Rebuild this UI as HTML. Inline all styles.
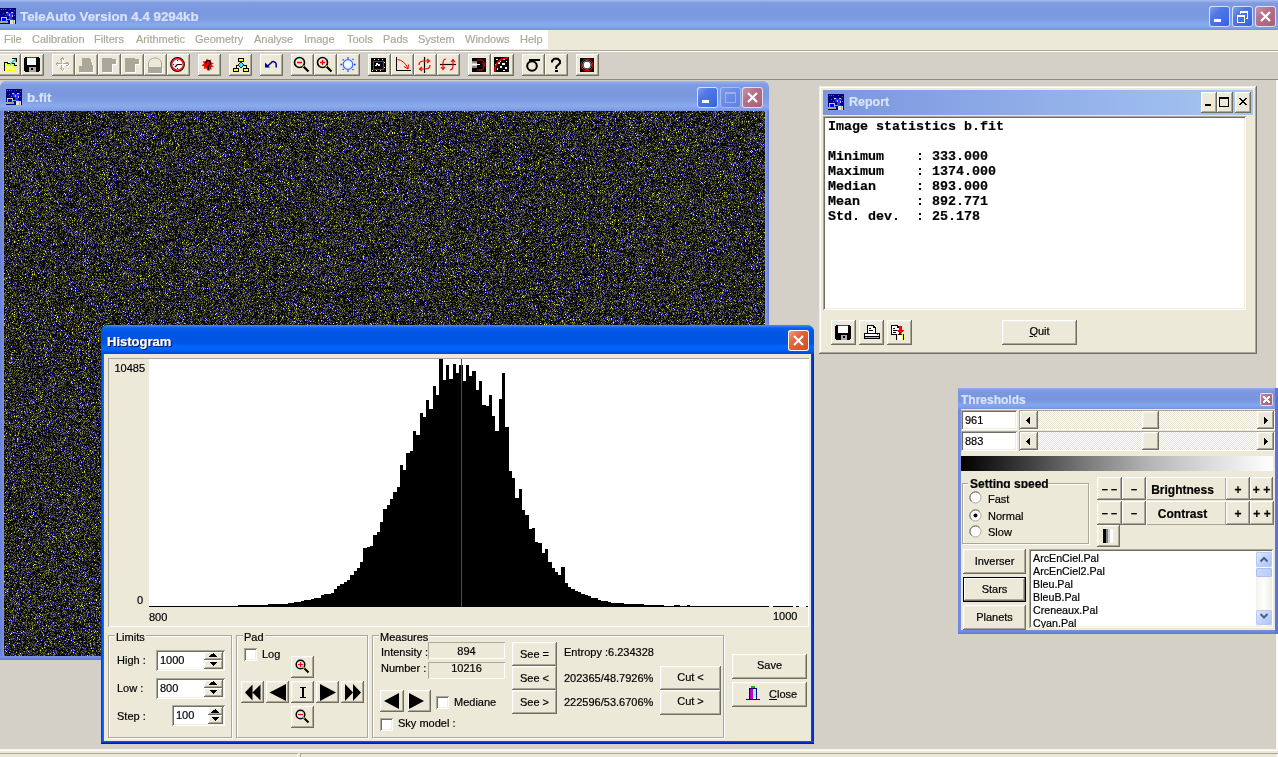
<!DOCTYPE html>
<html><head><meta charset="utf-8">
<style>
*{box-sizing:border-box}
html,body{margin:0;padding:0}
body{width:1278px;height:757px;overflow:hidden;position:relative;background:#D4D0C8;font-family:"Liberation Sans",sans-serif;font-size:11px;color:#000;-webkit-text-stroke:0.2px currentColor}
.a{position:absolute}
.t{position:absolute;white-space:nowrap;line-height:1;will-change:transform}
.face{background:#ECE9D8}
.btn{position:absolute;background:#ECE9D8;box-shadow:inset -1px -1px #716F64,inset 1px 1px #fff,inset -2px -2px #ACA899,inset 2px 2px #F1EFE2}
.tbtn{position:absolute;background:#ECE9D8;box-shadow:inset -1px -1px #716F64,inset 1px 1px #fff,inset -2px -2px #ACA899;width:23px;height:22px;top:54px}
.sunk{position:absolute;box-shadow:inset 1px 1px #ACA899,inset -1px -1px #fff,inset 2px 2px #716F64,inset -2px -2px #F1EFE2}
.sunk1{position:absolute;box-shadow:inset 1px 1px #ACA899,inset -1px -1px #fff}
.grp{position:absolute;border:1px solid #ACA899;box-shadow:inset 1px 1px #fff,1px 1px #fff}
.gl{position:absolute;background:#ECE9D8;padding:0 1px;line-height:1;top:-5px;white-space:nowrap;will-change:transform}
.ctr{display:flex;align-items:center;justify-content:center}
.xpt{position:absolute;border-radius:8px 8px 0 0}
.xb{position:absolute;width:21px;height:21px;border-radius:3px;box-shadow:inset 0 0 0 1px rgba(235,240,255,.85);background:linear-gradient(135deg,#88A4EE 0,#5078E6 35%,#3E6AE6 75%,#2D5ADC 100%)}
.xb svg{position:absolute;left:0;top:0}
.xc{background:linear-gradient(135deg,#C597B0 0,#B3728A 40%,#A85E74 100%)}
.xd{background:linear-gradient(135deg,#7E9BE8 0,#6A8BE4 50%,#5D80E0 100%);box-shadow:inset 0 0 0 1px rgba(200,215,250,.6)}
.xa{background:linear-gradient(135deg,#F2A68A 0,#E0653D 40%,#D24A1C 100%);box-shadow:inset 0 0 0 1px #fff}
.cb{position:absolute;width:16px;height:21px;background:#ECE9D8;box-shadow:inset -1px -1px #716F64,inset 1px 1px #fff,inset -2px -2px #ACA899,inset 2px 2px #F1EFE2}
.cb svg{position:absolute;left:0;top:0}
.chk{position:absolute;width:13px;height:13px;background:#fff;box-shadow:inset 1px 1px #ACA899,inset -1px -1px #fff,inset 2px 2px #716F64,inset -2px -2px #F1EFE2}
.fld{position:absolute;box-shadow:inset 1px 1px #ACA899,inset -1px -1px #fff}
.c{position:absolute;white-space:nowrap;line-height:1;text-align:center;will-change:transform}
</style></head><body>
<svg width="0" height="0" style="position:absolute"><defs>
<symbol id="ico" viewBox="0 0 16 16" shape-rendering="crispEdges">
<rect width="16" height="16" fill="#000080"/>
<path d="M1 1h1v1H1zM3 1h1v1H3zM5 1h1v1H5zM10 1h1v1h-1zM14 2h1v1h-1zM3 5h1v1H3zM5 7h1v1H5zM14 7h1v1h-1z" fill="#6060A0"/>
<path d="M6 4h3v1h2V4h3v2h-1v3h-1v2h1v2h-3v-2h-1V9H9V8H7V6H6z" fill="#3030FF"/>
<path d="M6 4h2v1H6zM11 4h2v1h-2zM9 6h1v2H9zM12 7h1v2h-1z" fill="#C8C8FF"/>
<path d="M1 9h6v5H1z" fill="#D0C8B0"/><path d="M2 10h4v3H2z" fill="#0000FF"/>
<path d="M0 13h8v2H0z" fill="#A8A090"/><path d="M1 13h3v1H1z" fill="#60E060"/>
<path d="M6 12h1v1H6zM7 11h3v1H7z" fill="#00D0E0"/>
<path d="M10 12h5v4h-5z" fill="#E8E0C8"/><path d="M13 12h1v4h-1z" fill="#B0A890"/>
</symbol>
</defs></svg>

<!-- ============ MAIN TITLE BAR ============ -->
<div class="a" style="left:0;top:0;width:1278px;height:30px;background:linear-gradient(#A8BCEC 0,#9AB0E8 1px,#7F9BE0 3px,#7A97DF 12px,#7C9ADF 18px,#87AAEF 25px,#7E9FE6 28px,#7192DB 30px)"></div>
<svg class="a" style="left:0;top:8px" width="16" height="16"><use href="#ico"/></svg>
<div class="t" style="left:20px;top:10px;font-size:13.3px;font-weight:bold;color:#D8E2F8">TeleAuto Version 4.4 9294kb</div>

<div class="xb" style="left:1209px;top:6px"><svg width="21" height="21"><path d="M5 13h7v3H5z" fill="#fff"/></svg></div>
<div class="xb" style="left:1232px;top:6px"><svg width="21" height="21" shape-rendering="crispEdges"><path d="M8 5h8v8h-2v-1h1V7H9v1H8z" fill="#fff"/><path d="M5 9h8v8H5zM6 11v5h6v-5z" fill="#fff" fill-rule="evenodd"/></svg></div>
<div class="xb xc" style="left:1255px;top:6px"><svg width="21" height="21"><path d="M6 6l9 9M15 6l-9 9" stroke="#fff" stroke-width="2.2"/></svg></div>
<!-- ============ MENU BAR ============ -->
<div class="a" style="left:0;top:30px;width:1278px;height:20px;background:#ECE9D8"></div>
<div class="a" style="left:0;top:30px;width:548px;height:19px;background:#fff"></div>
<div class="t" style="left:4px;top:34px;color:#ACA899">File</div><div class="t" style="left:32px;top:34px;color:#ACA899">Calibration</div><div class="t" style="left:94px;top:34px;color:#ACA899">Filters</div><div class="t" style="left:136px;top:34px;color:#ACA899">Arithmetic</div><div class="t" style="left:195px;top:34px;color:#ACA899">Geometry</div><div class="t" style="left:254px;top:34px;color:#ACA899">Analyse</div><div class="t" style="left:304px;top:34px;color:#ACA899">Image</div><div class="t" style="left:347px;top:34px;color:#ACA899">Tools</div><div class="t" style="left:383px;top:34px;color:#ACA899">Pads</div><div class="t" style="left:418px;top:34px;color:#ACA899">System</div><div class="t" style="left:465px;top:34px;color:#ACA899">Windows</div><div class="t" style="left:520px;top:34px;color:#ACA899">Help</div>
<div class="a" style="left:0;top:50px;width:1278px;height:1px;background:#ACA899"></div>
<div class="a" style="left:0;top:51px;width:1278px;height:1px;background:#fff"></div>

<!-- ============ TOOLBAR ============ -->
<div class="a" style="left:0;top:79px;width:1278px;height:1px;background:#8E8B7D"></div>
<div class="tbtn" style="left:-2px"></div><div class="tbtn" style="left:21px"></div><div class="tbtn" style="left:52px"></div><div class="tbtn" style="left:75px"></div><div class="tbtn" style="left:98px"></div><div class="tbtn" style="left:121px"></div><div class="tbtn" style="left:144px"></div><div class="tbtn" style="left:167px"></div><div class="tbtn" style="left:198px"></div><div class="tbtn" style="left:229px"></div><div class="tbtn" style="left:260px"></div><div class="tbtn" style="left:291px"></div><div class="tbtn" style="left:314px"></div><div class="tbtn" style="left:337px"></div><div class="tbtn" style="left:368px"></div><div class="tbtn" style="left:391px"></div><div class="tbtn" style="left:414px"></div><div class="tbtn" style="left:437px"></div><div class="tbtn" style="left:468px"></div><div class="tbtn" style="left:491px"></div><div class="tbtn" style="left:522px"></div><div class="tbtn" style="left:545px"></div><div class="tbtn" style="left:576px"></div>
<svg class="a" style="left:0;top:0" width="620" height="80" viewBox="0 0 620 80">
<g shape-rendering="crispEdges">
<!-- open folder -->
<path d="M4 62h4v1h7v2h2v1h-1v5H4z" fill="#000"/>
<path d="M5 63h2v1h7v2h2v5H5z" fill="#FFFF00"/>
<path d="M6 66h9v4H6z" fill="#FFF" opacity=".5"/>
<path d="M9 64l5-5h-2v-1h4v4h-1v-2l-5 5z" fill="#00E0C0"/>
<path d="M12 58h5v1h-5zM16 58h1v4h-1z" fill="#000"/>
<!-- floppy -->
<path d="M25 57h14v1h1v13h-1v1H25v-1h-1V58h1z" fill="#000"/>
<path d="M27 57h9v1h-9z" fill="#F00"/>
<path d="M27 58h9v7h-9z" fill="#FFF"/>
<path d="M29 67h7v5h-7z" fill="#A8A8A8"/>
<path d="M31 68h2v2h-2z" fill="#000"/>
<!-- disabled move -->
<g fill="#fff" transform="translate(1,1)">
<path d="M62 57l-2 2v1h1v3h-3v-1h-1l-2 2 2 2h1v-1h3v3h-1v1l2 2 2-2v-1h-1v-3h3v1h1l2-2-2-2h-1v1h-3v-3h1v-1z"/>
<path d="M82 58h8l3 8v6H79v-6h3zM102 58h10v1h4v5h-4v8h-10zM125 58h10v1h4v5h-4v8h-10zM148 67h14v6h-14z"/>
</g>
<g fill="#ACA899">
<path d="M62 57l-2 2v1h1v3h-3v-1h-1l-2 2 2 2h1v-1h3v3h-1v1l2 2 2-2v-1h-1v-3h3v1h1l2-2-2-2h-1v1h-3v-3h1v-1z"/>
<path d="M82 58h8l3 8v6H79v-6h3zM102 58h10v1h4v5h-4v8h-10zM125 58h10v1h4v5h-4v8h-10zM148 67h14v6h-14z"/>
</g>
<path d="M62 59v11M57 64h11" stroke="#fff" stroke-width="1"/>
</g>
<path d="M148.5 67V63a6.5 5 0 0 1 13 0V67" fill="none" stroke="#ACA899" stroke-width="1"/>
<!-- clock -->
<circle cx="177.5" cy="64.5" r="6.8" fill="#fff" stroke="#000" stroke-width="1.2"/>
<circle cx="177.5" cy="64.5" r="5.8" fill="none" stroke="#F00" stroke-width="1.4"/>
<g fill="#0000FF" shape-rendering="crispEdges"><rect x="177" y="60" width="1" height="1"/><rect x="177" y="68" width="1" height="1"/><rect x="173" y="64" width="1" height="1"/><rect x="181" y="64" width="1" height="1"/></g>
<path d="M177.5 64.5h3.5M177.5 64.5l-2.5 2.5" stroke="#000" stroke-width="1.1"/>
<!-- star ? -->
<path d="M207 58.5l1.5 2.5 2.5-1.5-.3 3 3 .5-2.2 2 2.5 1.5-3 .8.5 2.7-2.7-1.2-1.5 2-1-2.5-2.7.8.8-2.7-2.8-1 2.4-1.8-1.5-2.4 3 .3z" fill="#F00"/>
<path d="M206 63.5a2.3 2.3 0 1 1 3.5 1.3l-1.2 1v2.5l.9 2.3" fill="none" stroke="#000" stroke-width="1.3"/>
<!-- org chart -->
<g shape-rendering="crispEdges">
<path d="M238 58h6v4h-6zM233 68h6v4h-6zM243 68h6v4h-6z" fill="#000"/>
<path d="M239 59h4v2h-4zM234 69h4v2h-4zM244 69h4v2h-4z" fill="#FFFF00"/>
<path d="M236 68v-3h2M246 68v-3h-2" stroke="#000" fill="none"/>
</g>
<path d="M241 62l3 3-3 3-3-3z" fill="#40E0FF" stroke="#000" stroke-width=".8"/>
<!-- undo -->
<path d="M267.5 66l3.5-3a2.8 2.8 0 0 1 5.2 1.3v3.2" fill="none" stroke="#000080" stroke-width="1.5"/>
<path d="M265 62.5v5h5z" fill="#000080"/>
<!-- magnifiers -->
<g fill="none" stroke="#000" stroke-width="1.6"><circle cx="299.5" cy="62.5" r="5"/><circle cx="322.5" cy="62.5" r="5"/></g>
<path d="M303 66l5.5 5.5M326 66l5.5 5.5" stroke="#000" stroke-width="2.2"/>
<path d="M302.8 65.8l1 1M325.8 65.8l1 1" stroke="#E0E000" stroke-width="1.5"/>
<path d="M297 62.5h5M320 62.5h5M322.5 60v5" stroke="#F00" stroke-width="1.3"/>
<!-- sun -->
<circle cx="348" cy="64.5" r="4.8" fill="#E8F4FF" stroke="#3A6AFF" stroke-width="1.2"/>
<circle cx="347.5" cy="64" r="2.5" fill="#fff"/>
<g stroke="#1030FF" stroke-width="1.3"><path d="M348 57.2v1.6M348 70.2v1.6M340.5 64.5h1.6M354 64.5h1.6M342.8 59.5l.8.8M352.6 69.2l.8.8M352.6 59.8l.8-.8M342.8 69.8l.8-.8"/></g>
<!-- image icon -->
<g shape-rendering="crispEdges">
<path d="M371 58h15v14h-15z" fill="#000"/>
<path d="M373 61h10v8h-10z" fill="none" stroke="#F00" stroke-width="1"/>
<path d="M376 63h2v2h-2zM378 64h2v2h-2zM375 65h2v1h-2zM374 59h1v1h-1zM378 59h1v1h-1zM382 59h1v1h-1zM384 62h1v1h-1zM372 70h1v1h-1zM376 70h1v1h-1zM380 70h1v1h-1zM384 67h1v1h-1z" fill="#fff"/>
<!-- axes -->
<path d="M396 57h1v13h14v1h-15z" fill="#000"/>
</g>
<path d="M397.5 59.5q7 1 10.5 9" fill="none" stroke="#F00" stroke-width="1"/>
<path d="M404 66.5l4 2.5.5-4.5" fill="none" stroke="#F00" stroke-width="1"/>
<!-- vertical flip -->
<path d="M424.5 57v16" stroke="#000" stroke-width="1.2"/>
<path d="M419 65q0-4 5-4h5M427 59l2.5 2-2.5 2M430 65q0 4-5 4h-5M422 67l-2.5 2 2.5 2" fill="none" stroke="#F00" stroke-width="1.2"/>
<!-- horizontal flip -->
<path d="M440 64.5h16" stroke="#000" stroke-width="1.2"/>
<path d="M446 59q-3 0-3 5v5M441 67l2 2.5 2-2.5M450 70q3 0 3-5v-5M451 62l2-2.5 2 2.5" fill="none" stroke="#F00" stroke-width="1.2"/>
<!-- btn19 -->
<g shape-rendering="crispEdges">
<path d="M472 58h14v14h-14z" fill="#000"/>
<path d="M472 61h5v2h-5z" fill="#888"/><path d="M472 63h5v1h-5z" fill="#ccc"/><path d="M472 64h8v1h-8z" fill="#fff"/><path d="M472 65h5v1h-5z" fill="#ccc"/><path d="M472 66h5v2h-5z" fill="#888"/>
</g>
<path d="M477 60h4q3 0 3 4.5M477 70h4q3 0 3-4.5M482 62.5l2 2 2-2M482 66.5l2-2 2 2" fill="none" stroke="#F00" stroke-width="1"/>
<!-- btn20 -->
<g shape-rendering="crispEdges"><path d="M494 57h15v15h-15z" fill="#000"/>
<path d="M496 59h2v1h-2zM500 60h1v2h-1zM503 59h2v1h-2zM498 62h2v2h-2zM502 63h3v2h-3zM500 66h2v2h-2zM505 67h2v2h-2zM497 68h1v2h-1zM503 70h2v1h-2zM506 61h1v1h-1zM495 64h1v1h-1z" fill="#fff"/></g>
<path d="M494.8 72q0-13.5 13.5-14" fill="none" stroke="#F00" stroke-width="1.5"/>
<!-- sigma -->
<circle cx="532" cy="66" r="4.8" fill="none" stroke="#000" stroke-width="2"/>
<path d="M529 59h11v2h-11z" fill="#000" shape-rendering="crispEdges"/>
<path d="M552 62.5v-1.5l2.2-2.2h3.6l2.2 2.2v2l-3.8 3.8v2.2" fill="none" stroke="#000" stroke-width="2"/>
<path d="M555 69.5h3v2.5h-3z" fill="#000" shape-rendering="crispEdges"/>
<!-- btn23 -->
<path d="M580 58h14v14h-14z" fill="#000" shape-rendering="crispEdges"/>
<circle cx="587" cy="65" r="6" fill="none" stroke="#F00" stroke-width="1"/>
<circle cx="587" cy="65" r="3.3" fill="#fff"/>
<circle cx="587" cy="65" r="4.2" fill="none" stroke="#999" stroke-width="1"/>
</svg>

<div class="a" style="left:1276px;top:80px;width:2px;height:670px;background:linear-gradient(90deg,#F4F3EA,#fff)"></div>
<!-- ============ B.FIT WINDOW ============ -->
<div id="bfit" class="a" style="left:0;top:81px;width:769px;height:579px;background:#7E9BE3;border-radius:7px 7px 0 0"></div>
<div class="a" style="left:0;top:111px;width:4px;height:549px;background:linear-gradient(90deg,#6A80D6,#7088DA 50%,#7E96E0)"></div>
<div class="a" style="left:765px;top:111px;width:4px;height:549px;background:linear-gradient(90deg,#8AA6EA,#7790DE 50%,#6078D2)"></div>
<div class="a" style="left:0;top:656px;width:769px;height:4px;background:linear-gradient(#7C94E0,#7088DA 50%,#6078D0)"></div>
<div class="a" style="left:0;top:81px;width:769px;height:30px;border-radius:7px 7px 0 0;background:linear-gradient(#A6BBEE 0,#93ACEA 1px,#7F9BE2 4px,#7A97DF 14px,#7F9EE3 20px,#88AAEE 25px,#7C9BE4 29px,#7190DD 30px)"></div>
<svg class="a" style="left:6px;top:89px" width="16" height="16"><use href="#ico"/></svg>
<div class="t" style="left:27px;top:91px;font-size:13.3px;font-weight:bold;color:#D8E2F8">b.fit</div>
<div class="xb" style="left:697px;top:87px"><svg width="21" height="21"><path d="M5 13h7v3H5z" fill="#fff"/></svg></div>
<div class="xb xd" style="left:720px;top:87px"><svg width="21" height="21" shape-rendering="crispEdges"><path d="M5 5h11v11H5zM6 7v8h9V7z" fill="rgba(190,205,245,.55)" fill-rule="evenodd"/></svg></div>
<div class="xb xc" style="left:742px;top:87px"><svg width="21" height="21"><path d="M6 6l9 9M15 6l-9 9" stroke="#fff" stroke-width="2.2"/></svg></div>
<canvas id="noise" class="a" width="761" height="545" style="left:4px;top:111px;width:761px;height:545px;background:#222"></canvas>

<!-- ============ REPORT WINDOW ============ -->
<div class="a face" style="left:819px;top:86px;width:438px;height:268px;box-shadow:inset -1px -1px #716F64,inset 1px 1px #F1EFE2,inset -2px -2px #ACA899,inset 2px 2px #fff"></div>
<div class="a" style="left:823px;top:90px;width:430px;height:25px;background:linear-gradient(90deg,#7B96DF,#A6C6F2)"></div>
<svg class="a" style="left:828px;top:94px" width="16" height="16"><use href="#ico"/></svg>
<div class="t" style="left:849px;top:96px;font-size:12.5px;font-weight:bold;color:#D8E4F8">Report</div>
<div class="cb" style="left:1201px;top:92px"><svg width="16" height="21" shape-rendering="crispEdges"><path d="M4 12h6v2H4z" fill="#000"/></svg></div>
<div class="cb" style="left:1217px;top:92px"><svg width="16" height="21" shape-rendering="crispEdges"><path d="M2 5h10v10H2zM3 7v7h8V7z" fill="#000" fill-rule="evenodd"/></svg></div>
<div class="cb" style="left:1235px;top:92px"><svg width="16" height="21" shape-rendering="crispEdges"><path d="M4 6h2v1h1v1h2V7h1V6h2v1h-1v1h-1v1h-1v1h1v1h1v1h1v1h-2v-1H9v-1H7v1H6v1H4v-1h1v-1h1v-1h1V9H6V8H5V7H4z" fill="#000"/></svg></div>
<div class="sunk" style="left:823px;top:116px;width:423px;height:194px;background:#fff"></div>

<div class="a" style="will-change:transform;left:828px;top:119px;font-family:'Liberation Mono',monospace;font-weight:bold;font-size:13.33px;line-height:15px;white-space:pre">Image statistics b.fit

Minimum    : 333.000
Maximum    : 1374.000
Median     : 893.000
Mean       : 892.771
Std. dev.  : 25.178</div>
<div class="btn" style="left:831px;top:320px;width:25px;height:25px"></div>
<div class="btn" style="left:859px;top:320px;width:25px;height:25px"></div>
<div class="btn" style="left:887px;top:320px;width:25px;height:25px"></div>
<svg class="a" style="left:831px;top:320px" width="82" height="25" shape-rendering="crispEdges">
<path d="M5 5h14v1h1v13h-1v1H5v-1H4V6h1z" fill="#000"/><path d="M7 5h10v1H7z" fill="#F00"/><path d="M7 6h10v7H7z" fill="#fff"/><path d="M10 15h6v5h-6z" fill="#A8A8A8"/><path d="M12 16h2v2h-2z" fill="#000"/>
<path d="M36 5h6l3 3v6h-9z" fill="#000"/><path d="M37 6h5v2h2v6h-7z" fill="#fff"/><path d="M38 8h2v1h-2zM38 10h4v1h-4z" fill="#000"/>
<path d="M33 13h16v6h-16z" fill="#000"/><path d="M34 14h14v2H34z" fill="#fff"/><path d="M34 17h14v1H34z" fill="#A8A8A8"/><path d="M46 14h1v1h-1z" fill="#F00"/>
<path d="M60 5h6l3 3v7h-9z" fill="#000"/><path d="M61 6h5v2h2v6h-7z" fill="#fff"/><path d="M62 8h2v1h-2zM62 10h4v1h-4zM62 12h3v1h-3z" fill="#000"/>
<path d="M65 14h8v6h-8z" fill="#000"/><path d="M66 14h1v6h-1zM71 14h1v6h-1z" fill="#FFFF00"/><path d="M67 15h4v5h-4z" fill="#fff"/>
<path d="M68 6h3v4h2l-3.5 4-3.5-4h2z" fill="#F00"/>
</svg>
<div class="btn" style="left:1002px;top:320px;width:75px;height:25px"></div>
<div class="c" style="left:1002px;top:326px;width:75px"><u>Q</u>uit</div>
<!-- ============ THRESHOLDS WINDOW ============ -->
<div class="a" style="left:958px;top:388px;width:320px;height:246px;background:linear-gradient(90deg,#6F86DA,#7E96E2 1.5%,#7E96E2 98%,#5C74D4)"></div>
<div class="a face" style="left:961px;top:409px;width:314px;height:221px"></div>
<div class="a" style="left:958px;top:630px;width:320px;height:4px;background:linear-gradient(#7A92E0,#6C84D8 60%,#5E76D0)"></div>
<div class="a" style="left:958px;top:388px;width:320px;height:21px;background:linear-gradient(#9CB4EC 0,#86A2E6 1px,#7A97DF 4px,#7895DF 12px,#84A6EC 17px,#7F9FE8 19px,#7393DE 21px)"></div>
<div class="a" style="left:1275px;top:388px;width:3px;height:246px;background:#5C74D4"></div>
<div class="t" style="left:961px;top:394px;font-size:12px;font-weight:bold;color:#D8E4F8">Thresholds</div>
<div class="xb xc" style="left:1260px;top:393px;width:13px;height:13px;border-radius:2px"><svg width="13" height="13" shape-rendering="crispEdges"><path d="M3 3h2v1h1v1h1V4h1V3h2v2H9v1H8v1h1v1h1v2H8V9H7V8H6v1H5v1H3V8h1V7h1V6H4V5H3z" fill="#fff"/></svg></div>
<!-- edits -->
<div class="sunk" style="left:961px;top:410px;width:56px;height:20px;background:#fff"></div>
<div class="sunk" style="left:961px;top:431px;width:56px;height:20px;background:#fff"></div>
<div class="t" style="left:965px;top:415px">961</div>
<div class="t" style="left:965px;top:436px">883</div>
<!-- scrollbars -->
<div class="sunk1" style="left:1019px;top:410px;width:256px;height:20px;background:repeating-conic-gradient(#E6E3D4 0 25%,#fff 0 50%) 0 0/2px 2px"></div>
<div class="sunk1" style="left:1019px;top:431px;width:256px;height:20px;background:repeating-conic-gradient(#E6E3D4 0 25%,#fff 0 50%) 0 0/2px 2px"></div>
<div class="btn" style="left:1020px;top:411px;width:18px;height:18px"></div>
<div class="btn" style="left:1142px;top:411px;width:17px;height:18px"></div>
<div class="btn" style="left:1257px;top:411px;width:17px;height:18px"></div>
<div class="btn" style="left:1020px;top:432px;width:18px;height:18px"></div>
<div class="btn" style="left:1142px;top:432px;width:17px;height:18px"></div>
<div class="btn" style="left:1257px;top:432px;width:17px;height:18px"></div>
<svg class="a" style="left:1020px;top:410px" width="256" height="42" shape-rendering="crispEdges" fill="#000"><path d="M6 10h1v1h-1zM7 9h1v3h-1zM8 8h1v5h-1zM9 7h1v7h-1zM244 7h1v7h-1zM245 8h1v5h-1zM246 9h1v3h-1zM247 10h1v1h-1zM6 31h1v1h-1zM7 30h1v3h-1zM8 29h1v5h-1zM9 28h1v7h-1zM244 28h1v7h-1zM245 29h1v5h-1zM246 30h1v3h-1zM247 31h1v1h-1z"/></svg>
<!-- gradient -->
<div class="a" style="left:961px;top:456px;width:312px;height:15px;background:linear-gradient(90deg,#000 0%,#3a3a3a 20%,#7a7a7a 40%,#b4b4b4 60%,#dcdcdc 80%,#fff 100%)"></div>
<!-- Setting speed -->
<div class="grp" style="left:962px;top:483px;width:127px;height:61px"></div>
<div class="a" style="left:968px;top:476px;width:80px;height:12px;background:#ECE9D8;overflow:hidden"><div class="t" style="left:2px;top:2px;font-size:12px;font-weight:bold">Setting speed</div></div>
<svg class="a" style="left:969px;top:491px" width="14" height="50">
<g fill="#fff" stroke="#ACA899" stroke-width="1"><circle cx="6.5" cy="6.5" r="5.5"/><circle cx="6.5" cy="24.5" r="5.5"/><circle cx="6.5" cy="40.5" r="5.5"/></g>
<g fill="none" stroke="#716F64" stroke-width="1"><path d="M2.5 10.5a5 5 0 0 1 8-8M2.5 28.5a5 5 0 0 1 8-8M2.5 44.5a5 5 0 0 1 8-8"/></g>
<circle cx="6.5" cy="24.5" r="2" fill="#000"/>
</svg>
<div class="t" style="left:988px;top:494px">Fast</div>
<div class="t" style="left:988px;top:511px">Normal</div>
<div class="t" style="left:988px;top:527px">Slow</div>
<!-- B/C buttons -->
<div class="btn" style="left:1097px;top:477px;width:25px;height:23px"></div>
<div class="btn" style="left:1122px;top:477px;width:24px;height:23px"></div>
<div class="a" style="left:1146px;top:477px;width:80px;height:23px;box-shadow:inset 1px 1px #fff,inset -1px -1px #ACA899"></div>
<div class="btn" style="left:1226px;top:477px;width:24px;height:23px"></div>
<div class="btn" style="left:1250px;top:477px;width:23px;height:23px"></div>
<div class="btn" style="left:1097px;top:501px;width:25px;height:24px"></div>
<div class="btn" style="left:1122px;top:501px;width:24px;height:24px"></div>
<div class="a" style="left:1146px;top:501px;width:80px;height:24px;box-shadow:inset 1px 1px #fff,inset -1px -1px #ACA899"></div>
<div class="btn" style="left:1226px;top:501px;width:24px;height:24px"></div>
<div class="btn" style="left:1250px;top:501px;width:24px;height:24px"></div>
<div class="c" style="left:1097px;top:484px;width:25px;font-size:11px;font-weight:bold">&#8211; &#8211;</div>
<div class="c" style="left:1122px;top:484px;width:24px;font-size:11px;font-weight:bold">&#8211;</div>
<div class="c" style="left:1146px;top:484px;width:73px;font-size:12px;font-weight:bold">Brightness</div>
<div class="c" style="left:1226px;top:484px;width:24px;font-size:12px;font-weight:bold">+</div>
<div class="c" style="left:1250px;top:484px;width:23px;font-size:12px;font-weight:bold">+ +</div>
<div class="c" style="left:1097px;top:508px;width:25px;font-size:11px;font-weight:bold">&#8211; &#8211;</div>
<div class="c" style="left:1122px;top:508px;width:24px;font-size:11px;font-weight:bold">&#8211;</div>
<div class="c" style="left:1146px;top:508px;width:73px;font-size:12px;font-weight:bold">Contrast</div>
<div class="c" style="left:1226px;top:508px;width:24px;font-size:12px;font-weight:bold">+</div>
<div class="c" style="left:1250px;top:508px;width:24px;font-size:12px;font-weight:bold">+ +</div>
<div class="btn" style="left:1097px;top:525px;width:23px;height:22px"></div>
<svg class="a" style="left:1097px;top:525px" width="23" height="22" shape-rendering="crispEdges"><path d="M6 4h3v14H6z" fill="#000"/><path d="M9 4h2v14H9z" fill="#808080"/><path d="M11 4h2v14h-2z" fill="#D0D0D0"/><path d="M13 4h3v14h-3z" fill="#fff"/></svg>
<!-- left buttons -->
<div class="btn" style="left:963px;top:549px;width:63px;height:25px"></div>
<div class="a" style="left:963px;top:577px;width:63px;height:25px;background:#ECE9D8;box-shadow:inset 0 0 0 1px #000,inset -2px -2px #716F64,inset 2px 2px #fff,inset -3px -3px #ACA899"></div>
<div class="btn" style="left:963px;top:605px;width:63px;height:25px"></div>
<div class="c" style="left:963px;top:556px;width:63px">Inverser</div>
<div class="c" style="left:963px;top:584px;width:63px">Stars</div>
<div class="c" style="left:963px;top:612px;width:63px">Planets</div>
<!-- list -->
<div class="sunk" style="left:1029px;top:549px;width:244px;height:79px;background:#fff;overflow:hidden">
<div class="a" style="will-change:transform;left:4px;top:3px;line-height:13px;white-space:pre;font-size:10.7px">ArcEnCiel.Pal
ArcEnCiel2.Pal
Bleu.Pal
BleuB.Pal
Creneaux.Pal
Cyan.Pal</div>
</div>
<div class="a" style="left:1256px;top:551px;width:16px;height:75px;background:linear-gradient(90deg,#F3F1EC,#FEFEFB 50%,#EEEDE5)"></div>
<div class="a" style="left:1256px;top:552px;width:16px;height:15px;border-radius:2px;background:linear-gradient(135deg,#E4ECFD,#C3D3FD 50%,#A8C0F7);box-shadow:inset 0 0 0 1px #B7CBF6"></div>
<div class="a" style="left:1256px;top:568px;width:16px;height:9px;border-radius:2px;background:linear-gradient(90deg,#C9D8FC,#B8CCF9);box-shadow:inset 0 0 0 1px #A9BFF0"></div>
<div class="a" style="left:1256px;top:610px;width:16px;height:15px;border-radius:2px;background:linear-gradient(135deg,#E4ECFD,#C3D3FD 50%,#A8C0F7);box-shadow:inset 0 0 0 1px #B7CBF6"></div>
<svg class="a" style="left:1256px;top:552px" width="16" height="74"><path d="M4.5 9.5l3.5-3.5 3.5 3.5M4.5 62l3.5 3.5 3.5-3.5" fill="none" stroke="#4D6185" stroke-width="2"/></svg>


<!-- ============ HISTOGRAM WINDOW ============ -->
<div class="a" style="left:101px;top:325px;width:713px;height:419px;background:#0842D0;border-radius:7px 7px 0 0"></div>
<div class="a" style="left:101px;top:325px;width:713px;height:29px;border-radius:7px 7px 0 0;background:linear-gradient(#3D95FF 0,#2E82F8 1px,#0A5FEC 3px,#0055E5 8px,#0054E3 18px,#0066FF 22px,#0062F8 25px,#0046D5 29px)"></div>
<div class="a" style="left:101px;top:354px;width:3px;height:390px;background:linear-gradient(90deg,#0034D4,#0A58F2 50%,#1870FF)"></div>
<div class="a" style="left:811px;top:354px;width:3px;height:390px;background:linear-gradient(90deg,#0050EC,#0038D0 50%,#0020A8)"></div>
<div class="a" style="left:101px;top:741px;width:713px;height:3px;background:linear-gradient(#1262F8,#0032C4 50%,#00128E)"></div>
<div class="a face" style="left:104px;top:354px;width:707px;height:387px"></div>

<!-- histogram title -->
<div class="t" style="left:108px;top:336px;font-size:13px;font-weight:bold;color:#0A1850;">Histogram</div>
<div class="t" style="left:107px;top:335px;font-size:13px;font-weight:bold;color:#fff;">Histogram</div>
<div class="xb xa" style="left:788px;top:330px"><svg width="21" height="21"><path d="M6 6l9 9M15 6l-9 9" stroke="#fff" stroke-width="2.2"/></svg></div>
<!-- histogram panel -->
<div class="a" style="left:108px;top:358px;width:701px;height:269px;box-shadow:inset 1px 1px #ACA899,inset -1px -1px #fff"></div>
<div class="a" style="left:149px;top:359px;width:659px;height:248px;background:#fff"></div>
<svg class="a" style="left:149px;top:359px" width="659" height="248" shape-rendering="crispEdges"><path d="M0 247h3V248H0zM3 247h4V248H3zM7 247h3V248H7zM10 247h3V248H10zM13 247h3V248H13zM16 247h4V248H16zM20 247h3V248H20zM23 247h3V248H23zM26 247h4V248H26zM30 247h3V248H30zM33 247h3V248H33zM36 247h4V248H36zM40 247h3V248H40zM43 247h3V248H43zM46 247h4V248H46zM50 247h3V248H50zM53 247h3V248H53zM56 247h3V248H56zM59 247h4V248H59zM63 247h3V248H63zM66 247h3V248H66zM69 247h4V248H69zM73 247h3V248H73zM76 247h3V248H76zM79 247h3V248H79zM82 247h4V248H82zM86 247h3V248H86zM89 246h3V248H89zM92 246h4V248H92zM96 246h3V248H96zM99 246h3V248H99zM102 246h4V248H102zM106 246h3V248H106zM109 246h3V248H109zM112 246h4V248H112zM116 246h3V248H116zM119 245h3V248H119zM122 245h3V248H122zM125 245h4V248H125zM129 245h3V248H129zM132 245h3V248H132zM135 245h4V248H135zM139 244h3V248H139zM142 244h3V248H142zM145 243h3V248H145zM148 243h4V248H148zM152 242h3V248H152zM155 241h3V248H155zM158 241h4V248H158zM162 240h3V248H162zM165 239h3V248H165zM168 239h4V248H168zM172 236h3V248H172zM175 235h3V248H175zM178 235h4V248H178zM182 234h3V248H182zM185 230h3V248H185zM188 227h3V248H188zM191 225h4V248H191zM195 223h3V248H195zM198 221h3V248H198zM201 216h4V248H201zM205 212h3V248H205zM208 209h3V248H208zM211 203h3V248H211zM214 189h4V248H214zM218 188h3V248H218zM221 187h3V248H221zM224 176h4V248H224zM228 173h3V248H228zM231 163h3V248H231zM234 150h4V248H234zM238 146h3V248H238zM241 140h3V248H241zM244 133h4V248H244zM248 128h3V248H248zM251 106h3V248H251zM254 111h3V248H254zM257 94h4V248H257zM261 92h3V248H261zM264 72h3V248H264zM267 76h4V248H267zM271 54h3V248H271zM274 58h3V248H274zM277 41h3V248H277zM280 50h4V248H280zM284 27h3V248H284zM287 36h3V248H287zM290 0h4V248H290zM294 21h3V248H294zM297 6h3V248H297zM300 20h4V248H300zM304 5h3V248H304zM307 14h3V248H307zM310 6h4V248H310zM314 22h3V248H314zM317 6h3V248H317zM320 17h3V248H320zM323 12h4V248H323zM327 31h3V248H327zM330 22h3V248H330zM333 46h4V248H333zM337 47h3V248H337zM340 36h3V248H340zM343 57h3V248H343zM346 72h4V248H346zM350 40h3V248H350zM353 14h3V248H353zM356 68h4V248H356zM360 112h3V248H360zM363 119h3V248H363zM366 139h4V248H366zM370 130h3V248H370zM373 151h3V248H373zM376 156h4V248H376zM380 170h3V248H380zM383 169h3V248H383zM386 183h3V248H386zM389 184h4V248H389zM393 194h3V248H393zM396 190h3V248H396zM399 203h4V248H399zM403 209h3V248H403zM406 213h3V248H406zM409 216h3V248H409zM412 208h4V248H412zM416 224h3V248H416zM419 228h3V248H419zM422 230h4V248H422zM426 232h3V248H426zM429 233h3V248H429zM432 235h4V248H432zM436 236h3V248H436zM439 237h3V248H439zM442 239h4V248H442zM446 239h3V248H446zM449 241h3V248H449zM452 242h3V248H452zM455 242h4V248H455zM459 243h3V248H459zM462 244h3V248H462zM465 244h4V248H465zM469 244h3V248H469zM472 244h3V248H472zM475 245h3V248H475zM478 245h4V248H478zM482 245h3V248H482zM485 245h3V248H485zM488 245h4V248H488zM492 245h3V248H492zM495 246h3V248H495zM498 246h4V248H498zM502 246h3V248H502zM505 246h3V248H505zM508 246h4V248H508zM512 246h3V248H512zM515 247h3V248H515zM518 247h3V248H518zM521 247h4V248H521zM525 246h3V248H525zM528 246h3V248H528zM531 247h4V248H531zM535 247h3V248H535zM538 246h3V248H538zM541 247h3V248H541zM544 247h4V248H544zM548 247h3V248H548zM551 247h3V248H551zM554 247h4V248H554zM558 247h3V248H558zM561 247h3V248H561zM564 247h4V248H564zM568 247h3V248H568zM571 247h3V248H571zM574 247h4V248H574zM578 247h3V248H578zM581 247h3V248H581zM584 247h3V248H584zM587 247h4V248H587zM591 247h3V248H591zM594 247h3V248H594zM597 247h4V248H597zM601 247h3V248H601zM604 247h3V248H604zM607 247h3V248H607zM610 247h4V248H610zM614 247h3V248H614zM617 247h3V248H617zM624 247h3V248H624zM627 247h3V248H627zM630 247h4V248H630zM634 247h3V248H634zM637 247h3V248H637zM640 247h4V248H640zM647 247h3V248H647zM657 247h2V248H657z" fill="#000"/><rect x="312" y="0" width="1" height="248" fill="#F00"/></svg>
<div class="t" style="left:114px;top:363px;width:31px;text-align:right">10485</div>
<div class="t" style="left:114px;top:595px;width:29px;text-align:right">0</div>
<div class="t" style="left:149px;top:612px">800</div>
<div class="t" style="left:773px;top:611px">1000</div>
<!-- Limits -->
<div class="grp" style="left:108px;top:635px;width:124px;height:103px"></div>
<div class="gl" style="left:115px;top:632px">Limits</div>
<div class="t" style="left:117px;top:655px">High :</div>
<div class="t" style="left:117px;top:683px">Low :</div>
<div class="t" style="left:117px;top:711px">Step :</div>
<div class="sunk" style="left:156px;top:650px;width:69px;height:21px;background:#fff"></div>
<div class="btn" style="left:204px;top:652px;width:19px;height:8px"></div>
<div class="btn" style="left:204px;top:660px;width:19px;height:9px"></div>
<div class="sunk" style="left:156px;top:678px;width:69px;height:21px;background:#fff"></div>
<div class="btn" style="left:204px;top:680px;width:19px;height:8px"></div>
<div class="btn" style="left:204px;top:688px;width:19px;height:9px"></div>
<div class="sunk" style="left:172px;top:705px;width:53px;height:21px;background:#fff"></div>
<div class="btn" style="left:208px;top:707px;width:15px;height:8px"></div>
<div class="btn" style="left:208px;top:715px;width:15px;height:9px"></div>
<svg class="a" style="left:200px;top:650px" width="30" height="80" shape-rendering="crispEdges" fill="#000">
<path d="M13 3h1v1h1v1h1v1h1v1h-8v-1h1v-1h1v-1h1zM9 12h8v1h-1v1h-1v1h-1v1h-1v-1h-1v-1h-1v-1h-1zM13 31h1v1h1v1h1v1h1v1h-8v-1h1v-1h1v-1h1zM9 40h8v1h-1v1h-1v1h-1v1h-1v-1h-1v-1h-1v-1h-1zM15 59h1v1h1v1h1v1h1v1h-8v-1h1v-1h1v-1h1zM11 67h8v1h-1v1h-1v1h-1v1h-1v-1h-1v-1h-1v-1h-1z"/></svg>
<div class="t" style="left:160px;top:655px">1000</div>
<div class="t" style="left:160px;top:683px">800</div>
<div class="t" style="left:176px;top:710px">100</div>
<!-- Pad -->
<div class="grp" style="left:236px;top:635px;width:132px;height:103px"></div>
<div class="gl" style="left:243px;top:632px">Pad</div>
<div class="chk" style="left:244px;top:648px"></div>
<div class="t" style="left:262px;top:649px">Log</div>
<div class="btn" style="left:291px;top:656px;width:23px;height:22px"><svg width="23" height="22"><circle cx="9.5" cy="8.5" r="4.3" fill="#E8E8E8" stroke="#000" stroke-width="1.5"/><path d="M12.5 11.5l5 5" stroke="#000" stroke-width="2"/><path d="M12.3 11.3l1.2 1.2" stroke="#E0E000" stroke-width="1.3"/><path d="M7 8.5h5M9.5 6v5" stroke="#F00" stroke-width="1.2"/></svg></div>
<div class="btn" style="left:241px;top:681px;width:23px;height:22px"></div>
<div class="btn" style="left:266px;top:681px;width:23px;height:22px"></div>
<div class="btn" style="left:291px;top:681px;width:23px;height:22px"></div>
<div class="btn" style="left:316px;top:681px;width:23px;height:22px"></div>
<div class="btn" style="left:341px;top:681px;width:23px;height:22px"></div>
<div class="btn" style="left:291px;top:706px;width:23px;height:22px"><svg width="23" height="22"><circle cx="9.5" cy="8.5" r="4.3" fill="#E8E8E8" stroke="#000" stroke-width="1.5"/><path d="M12.5 11.5l5 5" stroke="#000" stroke-width="2"/><path d="M12.3 11.3l1.2 1.2" stroke="#E0E000" stroke-width="1.3"/><path d="M7 8.5h5" stroke="#F00" stroke-width="1.2"/></svg></div>
<svg class="a" style="left:240px;top:680px" width="130" height="24" fill="#000">
<path d="M5 12.5l7.5-8v16zM12.5 12.5l8-8v16zM29.5 12.5l16.5-8.5v17z"/>
<path d="M60 7h6v1h-2v9h2v1h-6v-1h2V8h-2z" shape-rendering="crispEdges"/>
<path d="M80 4l16 8.5-16 8.5zM105 4l8 8.5-8 8.5zM113 4l8 8.5-8 8.5z"/>
</svg>
<!-- Measures -->
<div class="grp" style="left:372px;top:635px;width:352px;height:103px"></div>
<div class="gl" style="left:379px;top:632px">Measures</div>
<div class="t" style="left:381px;top:647px">Intensity :</div>
<div class="t" style="left:381px;top:663px">Number :</div>
<div class="fld" style="left:428px;top:642px;width:77px;height:17px"></div>
<div class="fld" style="left:428px;top:662px;width:77px;height:17px"></div>
<div class="c" style="left:428px;top:646px;width:77px">894</div>
<div class="c" style="left:428px;top:663px;width:77px">10216</div>
<div class="btn" style="left:380px;top:690px;width:24px;height:22px"></div>
<div class="btn" style="left:408px;top:690px;width:23px;height:22px"></div>
<svg class="a" style="left:380px;top:690px" width="52" height="22" fill="#000"><path d="M4 11l15-8v16zM44 11l-15-8v16z"/></svg>
<div class="chk" style="left:436px;top:696px"></div>
<div class="t" style="left:454px;top:697px">Mediane</div>
<div class="chk" style="left:380px;top:718px"></div>
<div class="t" style="left:398px;top:718px">Sky model :</div>
<div class="btn" style="left:512px;top:642px;width:45px;height:24px"></div>
<div class="btn" style="left:512px;top:666px;width:45px;height:24px"></div>
<div class="btn" style="left:512px;top:690px;width:45px;height:24px"></div>
<div class="c" style="left:512px;top:649px;width:45px">See =</div>
<div class="c" style="left:512px;top:673px;width:45px">See &lt;</div>
<div class="c" style="left:512px;top:697px;width:45px">See &gt;</div>
<div class="t" style="left:564px;top:647px">Entropy :6.234328</div>
<div class="t" style="left:564px;top:673px">202365/48.7926%</div>
<div class="t" style="left:564px;top:697px">222596/53.6706%</div>
<div class="btn" style="left:660px;top:666px;width:61px;height:24px"></div>
<div class="btn" style="left:660px;top:690px;width:61px;height:25px"></div>
<div class="c" style="left:660px;top:672px;width:61px">Cut &lt;</div>
<div class="c" style="left:660px;top:696px;width:61px">Cut &gt;</div>
<!-- Save / Close -->
<div class="btn" style="left:732px;top:654px;width:75px;height:25px"></div>
<div class="btn" style="left:732px;top:682px;width:75px;height:25px"></div>
<div class="c" style="left:732px;top:660px;width:75px">Save</div>
<div class="t" style="left:769px;top:689px"><u>C</u>lose</div>
<svg class="a" style="left:745px;top:684px" width="20" height="20" shape-rendering="crispEdges">
<path d="M6 2h4v2H6z" fill="#00C000"/><path d="M5 5h3v10H5z" fill="#C000C0"/><path d="M8 5h3v10H8z" fill="#80FFFF"/>
<path d="M4 4h1v11H4zM11 4h1v11h-1zM5 4h6v1H5z" fill="#000080"/><path d="M1 15h14v1H1z" fill="#0000C0"/><path d="M8 14h3v1H8z" fill="#fff"/></svg>
<!-- ============ STATUS BAR ============ -->
<div class="a" style="left:0;top:749px;width:1278px;height:1px;background:#F6F5EE"></div>
<div class="a" style="left:0;top:750px;width:1278px;height:1px;background:#fff"></div>
<div class="a face" style="left:0;top:751px;width:1278px;height:6px"></div>
<div class="a" style="left:-1px;top:753px;width:299px;height:10px;box-shadow:inset 1px 1px #ACA899,inset -1px -1px #fff"></div>
<div class="a" style="left:300px;top:753px;width:978px;height:10px;box-shadow:inset 1px 1px #ACA899,inset -1px -1px #fff"></div>

<script>
(function(){
var c=document.getElementById('noise');var x=c.getContext('2d');
var w=c.width,h=c.height;var im=x.createImageData(w,h);var d=im.data;
var s=123456789;function r(){s^=s<<13;s^=s>>>17;s^=s<<5;return (s>>>0)/4294967296;}
for(var yy=0;yy<h;yy++){var pg=0;for(var xx=0;xx<w;xx++){var i=yy*w+xx;var v=r();var g,R,G,B;
 if(v<0.47){g=r()*16;R=g;G=g;B=g*1.3;}else if(v<0.80){g=30+r()*45;R=g;G=g;B=g*0.85;}else if(v<0.965){g=80+r()*60;R=g;G=g;B=g*0.55;}else{g=160+r()*95;R=g;G=g;B=g*0.3;}
 if(pg>100){B=Math.max(B,pg*0.8);R=R*0.6;G=G*0.6;}
 d[i*4]=R;d[i*4+1]=G;d[i*4+2]=B;d[i*4+3]=255;pg=g;}}
x.putImageData(im,0,0);
})();
</script>
</body></html>
